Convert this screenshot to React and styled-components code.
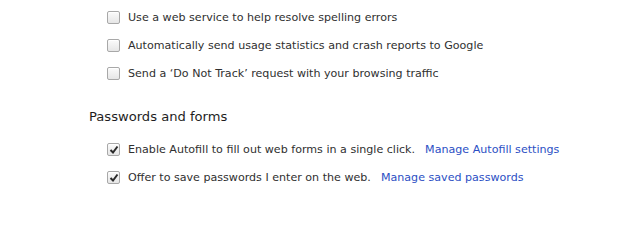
import React from "react";
import styled, { createGlobalStyle } from "styled-components";

const GlobalStyle = createGlobalStyle`
  html, body {
    margin: 0;
    background: #ffffff;
  }
  body {
    font-family: "DejaVu Sans", "Liberation Sans", sans-serif;
    -webkit-font-smoothing: antialiased;
  }
`;

const Page = styled.div`
  width: 618px;
  height: 212px;
  overflow: hidden;
  padding: 6px 0 0 89px;
  box-sizing: border-box;
  color: #303030;
`;

const Group = styled.div`
  display: flex;
  flex-direction: column;
  gap: 6px;
  padding-left: 18px;
`;

const Row = styled.label`
  display: flex;
  align-items: center;
  height: 22px;
  gap: 8px;
  font-size: 11.1px;
`;

const Box = styled.span`
  width: 11px;
  height: 11px;
  border: 1px solid #a8a8a8;
  border-radius: 2px;
  background: linear-gradient(#fbfbfb, #e6e6e6);
  box-shadow: inset 0 1px 0 #fff;
  display: flex;
  align-items: center;
  justify-content: center;
  flex-shrink: 0;
`;

const Link = styled.a`
  color: #2c4fc4;
  text-decoration: none;
  margin-left: 10px;
`;

const Heading = styled.h3`
  margin: 25px 0 14px;
  font-size: 13.1px;
  font-weight: normal;
  color: #1e1e1e;
`;

const Check = () => (
  <svg width="10" height="9" viewBox="0 0 10 9">
    <path d="M1.5 5 L4 7.5 L8.5 1.5" fill="none" stroke="#2a2a2a" strokeWidth="2" />
  </svg>
);

const Option = ({ checked, children, link }) => (
  <Row>
    <Box>{checked && <Check />}</Box>
    <span>
      {children}
      {link && <Link href="#">{link}</Link>}
    </span>
  </Row>
);

export default function App() {
  return (
    <Page>
      <GlobalStyle />
      <Group>
        <Option>Use a web service to help resolve spelling errors</Option>
        <Option>Automatically send usage statistics and crash reports to Google</Option>
        <Option>Send a ‘Do Not Track’ request with your browsing traffic</Option>
      </Group>
      <Heading>Passwords and forms</Heading>
      <Group>
        <Option checked link="Manage Autofill settings">
          Enable Autofill to fill out web forms in a single click.
        </Option>
        <Option checked link="Manage saved passwords">
          Offer to save passwords I enter on the web.
        </Option>
      </Group>
    </Page>
  );
}
